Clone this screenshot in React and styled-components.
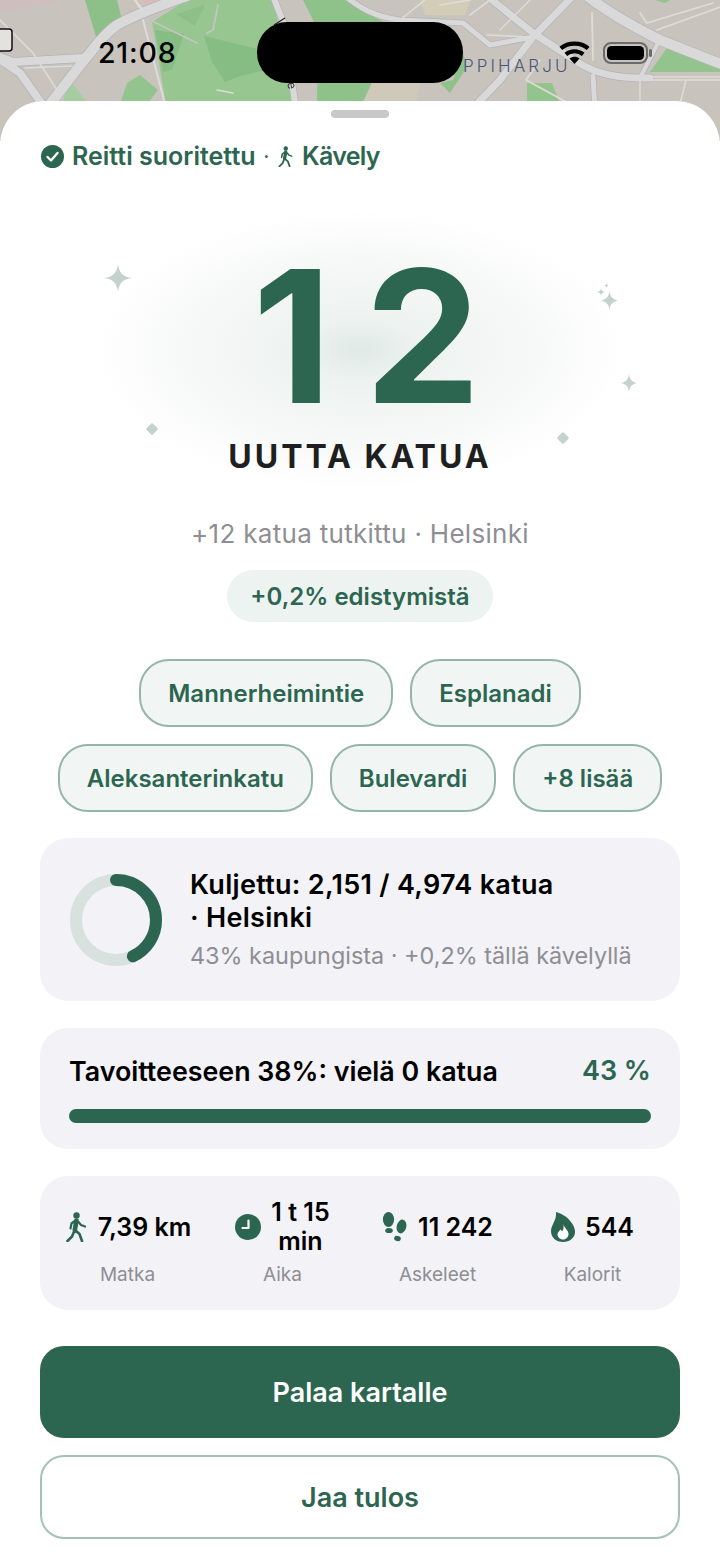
import styled, { createGlobalStyle } from "styled-components";

const GREEN = "#2c6650";
const GREY = "#8e8e93";

const Global = createGlobalStyle`
  html, body { margin: 0; padding: 0; background: #fff; }
  body { font-family: Inter, "Liberation Sans", sans-serif; width: 720px; height: 1564px; overflow: hidden; }
  * { box-sizing: border-box; }
`;

const Screen = styled.div`
  position: relative;
  width: 720px;
  height: 1564px;
  overflow: hidden;
`;

const MapArea = styled.div`
  position: relative;
  height: 141px;
  background: #c8c3bd;
  overflow: hidden;
`;

const MapSvg = styled.svg`
  display: block;
  width: 720px;
  height: 141px;
  filter: blur(0.6px);
`;

const StatusBar = styled.div`
  position: absolute;
  top: 0;
  left: 0;
  right: 0;
  height: 101px;
`;

const Clock = styled.span`
  position: absolute;
  left: 98px;
  top: 35px;
  font-size: 28.5px;
  line-height: 36px;
  font-weight: 500;
  letter-spacing: 0.8px;
  color: #000;
`;

const Island = styled.div`
  position: absolute;
  left: 257px;
  top: 22px;
  width: 206px;
  height: 61px;
  border-radius: 30px;
  background: #000;
`;

const DistrictLabel = styled.span`
  position: absolute;
  left: 463px;
  top: 55px;
  font-size: 17px;
  line-height: 22px;
  font-weight: 300;
  letter-spacing: 3.1px;
  color: #4a5878;
`;

const StatusIcon = styled.svg`
  position: absolute;
  left: ${(p) => p.$left}px;
  top: ${(p) => p.$top}px;
`;

const Sheet = styled.main`
  position: relative;
  margin-top: -40px;
  height: 1463px;
  padding: 0 40px;
  background: #fff;
  border-radius: 44px 44px 0 0;
  display: flex;
  flex-direction: column;
`;

const Grabber = styled.div`
  align-self: center;
  width: 58px;
  height: 8px;
  margin-top: 9px;
  border-radius: 4px;
  background: #c8c8c8;
`;

const RouteStatus = styled.div`
  display: flex;
  align-items: center;
  margin-top: 21px;
  height: 34px;
  color: ${GREEN};
  font-size: 25px;
  font-weight: 600;
`;

const RouteDot = styled.span`
  margin: 0 8px;
  font-size: 18px;
`;

const RouteWalker = styled.span`
  display: flex;
  margin-right: 8px;
`;

const RouteKind = styled.span`
  letter-spacing: -0.7px;
`;

const Hero = styled.section`
  position: relative;
  height: 330px;
  margin: 0 -40px;
  display: flex;
  flex-direction: column;
  align-items: center;
`;

const Glow = styled.div`
  position: absolute;
  left: 95px;
  top: 37px;
  width: 530px;
  height: 280px;
  background: radial-gradient(ellipse 50% 50% at 50% 50%, #dfe9e5 0%, #edf2f0 22%, #f4f7f6 55%, #fbfcfb 85%, #ffffff 100%);
`;

const Sparkle = styled.svg`
  position: absolute;
  left: ${(p) => p.$left}px;
  top: ${(p) => p.$top}px;
  fill: #c3d2cc;
`;

const Count = styled.div`
  position: relative;
  margin-top: 83px;
  margin-left: 46px;
  font-size: 184px;
  line-height: 160px;
  font-weight: 700;
  color: ${GREEN};
  letter-spacing: 33px;
`;

const CountLabel = styled.div`
  position: relative;
  margin-top: 21px;
  font-size: 32px;
  line-height: 40px;
  font-weight: 700;
  color: #1f1f21;
  letter-spacing: 3px;
`;

const Summary = styled.div`
  margin-top: 14px;
  text-align: center;
  font-size: 26px;
  line-height: 34px;
  letter-spacing: 0.3px;
  color: ${GREY};
`;

const ProgressPill = styled.div`
  align-self: center;
  margin-top: 19px;
  height: 52px;
  padding: 0 23px;
  display: flex;
  align-items: center;
  border-radius: 26px;
  background: #edf3f0;
  color: ${GREEN};
  font-size: 24px;
  font-weight: 600;
`;

const Streets = styled.div`
  margin-top: 37px;
  display: flex;
  flex-wrap: wrap;
  justify-content: center;
  gap: 17px;
`;

const Street = styled.div`
  height: 68px;
  padding: 0 27px;
  display: flex;
  align-items: center;
  border-radius: 30px;
  border: 2px solid #96b5a9;
  background: #f1f6f4;
  color: ${GREEN};
  font-size: 24px;
  font-weight: 600;
`;

const Card = styled.section`
  background: #f2f2f7;
  border-radius: 28px;
`;

const WalkedCard = styled(Card)`
  margin-top: 26px;
  height: 163px;
  padding: 0 30px;
  display: flex;
  align-items: center;
  gap: 28px;
`;

const RingBox = styled.svg`
  flex: none;
  display: block;
`;

const WalkedText = styled.div`
  display: flex;
  flex-direction: column;
`;

const WalkedTitle = styled.div`
  font-size: 27px;
  line-height: 33px;
  font-weight: 600;
  letter-spacing: 0.3px;
  color: #000;
  width: 365px;
`;

const WalkedNote = styled.div`
  margin-top: 6px;
  font-size: 23.4px;
  line-height: 32px;
  color: ${GREY};
  white-space: nowrap;
`;

const GoalCard = styled(Card)`
  margin-top: 27px;
  height: 121px;
  padding: 24px 29px 0;
`;

const GoalRow = styled.div`
  display: flex;
  justify-content: space-between;
  align-items: center;
  height: 37px;
`;

const GoalLabel = styled.span`
  font-size: 26.8px;
  font-weight: 600;
  color: #000;
`;

const GoalValue = styled.span`
  font-size: 27px;
  font-weight: 600;
  color: ${GREEN};
`;

const GoalBar = styled.div`
  margin-top: 20px;
  height: 14px;
  border-radius: 7px;
  background: ${GREEN};
`;

const StatsCard = styled(Card)`
  margin-top: 27px;
  height: 134px;
  padding: 21px 10px 0;
  display: grid;
  grid-template-columns: repeat(4, 1fr);
`;

const Stat = styled.div`
  display: flex;
  flex-direction: column;
  align-items: center;
`;

const StatTop = styled.div`
  height: 60px;
  display: flex;
  align-items: center;
  justify-content: center;
  gap: 10px;
`;

const StatValue = styled.span`
  font-size: 25px;
  line-height: 29px;
  font-weight: 600;
  color: #000;
  text-align: center;
  white-space: pre-line;
`;

const StatLabel = styled.span`
  margin-top: 6px;
  font-size: 19px;
  line-height: 24px;
  color: ${GREY};
`;

const PrimaryButton = styled.button`
  margin-top: 36px;
  height: 92px;
  width: 100%;
  border: none;
  border-radius: 24px;
  background: ${GREEN};
  color: #fff;
  font: 600 27px Inter, sans-serif;
`;

const SecondaryButton = styled.button`
  margin-top: 17px;
  height: 84px;
  width: 100%;
  border: 2px solid #a5c0b5;
  border-radius: 24px;
  background: #fff;
  color: ${GREEN};
  font: 600 27px Inter, sans-serif;
`;

const STAR = "M12 0 C12.8 7.5 16.5 11.2 24 12 C16.5 12.8 12.8 16.5 12 24 C11.2 16.5 7.5 12.8 0 12 C7.5 11.2 11.2 7.5 12 0 Z";

function Star({ left, top, size }) {
  return (
    <Sparkle $left={left} $top={top} width={size} height={size} viewBox="0 0 24 24">
      <path d={STAR} />
    </Sparkle>
  );
}

function Diamond({ left, top }) {
  return (
    <Sparkle $left={left} $top={top} width="14" height="14" viewBox="0 0 14 14">
      <rect x="2.5" y="2.5" width="9" height="9" rx="1.5" transform="rotate(45 7 7)" />
    </Sparkle>
  );
}

function Walker({ size = 30, color = GREEN }) {
  return (
    <svg width={size * 0.8} height={size} viewBox="0 0 24 30" fill="none" style={{ flex: "none" }}>
      <circle cx="12.5" cy="3.4" r="3.2" fill={color} />
      <path d="M11.5 8.5 L7.5 11.5 L6.5 16.5" stroke={color} strokeWidth="2.2" strokeLinecap="round" strokeLinejoin="round" />
      <path d="M14.5 10 L17 13 L21 14.5" stroke={color} strokeWidth="2.2" strokeLinecap="round" strokeLinejoin="round" />
      <path d="M12.5 8.5 L10.8 18" stroke={color} strokeWidth="4.6" strokeLinecap="round" />
      <path d="M11 18 L15.5 22 L18 29 M10.5 18.5 L8 24.5 L3.5 29" stroke={color} strokeWidth="2.6" strokeLinecap="round" strokeLinejoin="round" />
    </svg>
  );
}

function Clock24() {
  return (
    <svg width="26" height="26" viewBox="0 0 26 26" style={{ flex: "none" }}>
      <circle cx="13" cy="13" r="13" fill={GREEN} />
      <path d="M13.5 6.5 V14 H7.5" stroke="#fff" strokeWidth="2.2" fill="none" strokeLinecap="round" strokeLinejoin="round" />
    </svg>
  );
}

function Footprints() {
  return (
    <svg width="26" height="30" viewBox="0 0 26 30" fill={GREEN} style={{ flex: "none" }}>
      <ellipse cx="6.5" cy="7.5" rx="5.6" ry="7.5" />
      <ellipse cx="7" cy="18.5" rx="3.8" ry="2.6" />
      <ellipse cx="19.5" cy="14.5" rx="4.8" ry="7" transform="rotate(14 19.5 14.5)" />
      <ellipse cx="15.5" cy="26.5" rx="3.4" ry="2.6" transform="rotate(14 15.5 26.5)" />
    </svg>
  );
}

function Flame() {
  return (
    <svg width="24" height="30" viewBox="0 0 24 30" style={{ flex: "none" }}>
      <path d="M5 0 C9 1 16 4 20 10 C23 14 24 17 24 20 C24 26 18.5 30 12 30 C5 30 0 25.5 0 19 C0 13 6 8 5 0 Z" fill={GREEN} />
      <path d="M12.5 12 C13 16 17.5 18 17.5 22 C17.5 25 15 27.5 12 27.5 C9 27.5 6.5 25 6.5 22.5 C6.5 20 8.5 19 9.5 17.5 C10.5 18.5 11 19 11.5 19 C12.5 17.5 12.8 15 12.5 12 Z" fill="#fff" />
    </svg>
  );
}

function RouteCheck() {
  return (
    <svg width="23" height="23" viewBox="0 0 23 23" style={{ flex: "none", marginRight: 8, marginLeft: 1 }}>
      <circle cx="11.5" cy="11.5" r="11.5" fill={GREEN} />
      <path d="M6.5 12 L10 15.5 L16.5 8" stroke="#fff" strokeWidth="2.4" fill="none" strokeLinecap="round" strokeLinejoin="round" />
    </svg>
  );
}

function Ring() {
  return (
    <RingBox width="92" height="92" viewBox="0 0 92 92" fill="none">
      <circle cx="46" cy="46" r="40" stroke="#d9e1df" strokeWidth="12" />
      <circle cx="46" cy="46" r="40" stroke={GREEN} strokeWidth="12" strokeLinecap="round" strokeDasharray="108 252" transform="rotate(-90 46 46)" />
    </RingBox>
  );
}

// wide streets get a darker casing, drawn in a first pass
const majorRoads = [
  ["M187 -4 C165 4 140 12 117 25 C105 33 97 44 90 53 C80 65 65 85 50 104", 10],
  ["M0 57 L13 62 L83 58 L92 52", 8],
  ["M-2 58 L20 73 L42 104", 8],
  ["M487 -4 L533 33 L570 57 C590 72 610 77 637 78 H650", 7],
  ["M573 -4 L533 37 L500 80 L477 104", 7],
  ["M587 -4 C600 6 620 20 660 40 C685 50 700 56 724 65", 10],
  ["M345 -4 C360 8 375 17 400 20 L463 23 L490 45 L533 37", 5],
  ["M273 -4 L284 24 L296 110", 6],
  ["M593 76 L595 110", 5],
  ["M657 45 L640 78", 4],
];

// Street map behind the sheet
function MapBackdrop() {
  return (
    <MapSvg viewBox="0 0 720 141">
      <rect width="720" height="141" fill="#c8c3bd" />
      <path d="M0 0 H60 L30 8 L0 12 Z" fill="#cdbfbd" />
      <path d="M135 0 H160 L145 4 Z" fill="#dcb9bb" />
      {/* parks */}
      <path d="M85 0 H117 L122 20 L97 40 Z" fill="#8cc088" />
      <path d="M187 0 H273 L296 110 H167 L152 22 Z" fill="#97c691" />
      <path d="M155 30 L184 34 L172 70 L163 72 Z" fill="#86bd83" />
      <path d="M204 36 L270 52 L282 66 L240 76 L225 82 L212 62 Z" fill="#86bd83" />
      <path d="M176 14 L205 5 L195 26 Z" fill="#8cc088" />
      <path d="M70 80 L88 104 H62 Z" fill="#a6cda0" />
      <path d="M127 83 L140 75 L158 90 L147 104 H120 Z" fill="#93c48d" />
      <path d="M303 0 H345 L380 20 L400 30 L365 104 H317 L318 30 Z" fill="#8fc18b" />
      <path d="M375 76 L398 30 L432 44 L415 104 H362 Z" fill="#cfc9ba" />
      <path d="M463 53 L453 80 L440 83 L450 93 L467 67 Z" fill="#8fc18b" />
      <path d="M527 83 H552 L560 104 H527 Z" fill="#94c48e" />
      <path d="M667 48 L720 67 V72 H650 Z" fill="#93c48d" />
      <path d="M655 0 H670 L665 3 Z" fill="#93c48d" />
      <path d="M420 0 H470 L465 15 L425 15 Z" fill="#d3cdb8" />
      <g stroke="#b2b2b8" fill="none" strokeLinecap="round" strokeLinejoin="round">
        {majorRoads.map(([d, w]) => (
          <path key={d} d={d} strokeWidth={w + 1.4} />
        ))}
      </g>
      <g stroke="#d9d9d9" fill="none" strokeLinecap="round" strokeLinejoin="round">
        {majorRoads.map(([d, w]) => (
          <path key={d} d={d} strokeWidth={w} />
        ))}
      </g>
      {/* side streets */}
      <g stroke="#dedcd8" fill="none" strokeLinecap="round" strokeLinejoin="round">
        <path d="M0 20 L33 53 L57 90" strokeWidth="1.6" />
        <path d="M25 68 L72 66" strokeWidth="1.6" />
        <path d="M143 20 L165 104" strokeWidth="2" />
        <path d="M135 0 L142 10" strokeWidth="2.5" />
        <path d="M150 20 L197 43 M218 5 L213 30 L207 33" strokeWidth="1.8" stroke="#c4c4c4" />
        <path d="M217 90 L233 93" strokeWidth="1.4" />
        <path d="M487 35 L530 37" strokeWidth="1.6" />
        <path d="M592 13 L593 60" strokeWidth="1.8" />
        <path d="M640 13 L647 23 L713 3" strokeWidth="1.8" />
        <path d="M657 30 L720 7" strokeWidth="1.8" />
        <path d="M650 77 H720 M650 80 H720" strokeWidth="1.4" />
        <path d="M686 80 L680 104" strokeWidth="1.6" />
        <path d="M640 80 V104" strokeWidth="1.4" />
        <path d="M440 5 L470 0 M400 20 L425 0 M470 15 L490 0" strokeWidth="1.6" />
        <path d="M500 30 L530 0" strokeWidth="1.4" />
        <path d="M540 60 L526 80 L570 104" strokeWidth="1.6" />
      </g>
      <rect x="-6" y="29" width="18" height="22" rx="3" fill="#e4e2de" stroke="#111" strokeWidth="1.5" />
      <path d="M274 25 L285 18" stroke="#222" strokeWidth="1.2" />
      <text x="287" y="91" fontSize="12" fill="#333" fontFamily="Inter" transform="rotate(80 292 87)">e</text>
    </MapSvg>
  );
}

const streetNames = ["Mannerheimintie", "Esplanadi", "Aleksanterinkatu", "Bulevardi", "+8 lisää"];

const stats = [
  { icon: <Walker />, value: "7,39 km", label: "Matka" },
  { icon: <Clock24 />, value: "1 t 15\nmin", label: "Aika" },
  { icon: <Footprints />, value: "11 242", label: "Askeleet" },
  { icon: <Flame />, value: "544", label: "Kalorit" },
];

export default function App() {
  return (
    <>
      <Global />
      <Screen>
        <MapArea>
          <MapBackdrop />
        </MapArea>
        <StatusBar>
          <DistrictLabel>PPIHARJU</DistrictLabel>
          <Clock>21:08</Clock>
          <Island />
          <StatusIcon $left={559} $top={41} width="31" height="23" viewBox="0 0 34 25">
            <path d="M17 25 L11.5 19 C15 16.5 19 16.5 22.5 19 Z" fill="#000" />
            <path d="M7.5 14.5 C13 10 21 10 26.5 14.5 M2 8 C10 1 24 1 32 8" stroke="#000" strokeWidth="4.6" fill="none" />
          </StatusIcon>
          <StatusIcon $left={603} $top={42} width="50" height="22" viewBox="0 0 50 22">
            <rect x="1" y="1" width="43" height="20" rx="7" fill="none" stroke="#6b6b6b" strokeWidth="2" />
            <rect x="4" y="4" width="37" height="14" rx="4.5" fill="#000" />
            <rect x="46" y="7" width="3" height="8" rx="1.5" fill="#6b6b6b" />
          </StatusIcon>
        </StatusBar>
        <Sheet>
          <Grabber />
          <RouteStatus>
            <RouteCheck />
            Reitti suoritettu
            <RouteDot>·</RouteDot>
            <RouteWalker><Walker size={21} /></RouteWalker>
            <RouteKind>Kävely</RouteKind>
          </RouteStatus>
          <Hero>
            <Glow />
            <Star left={104} top={91} size={28} />
            <Star left={600} top={118} size={19} />
            <Star left={597} top={115} size={8} />
            <Star left={604} top={110} size={5} />
            <Star left={620} top={201} size={18} />
            <Diamond left={145} top={249} />
            <Diamond left={556} top={258} />
            <Count>12</Count>
            <CountLabel>UUTTA KATUA</CountLabel>
          </Hero>
          <Summary>+12 katua tutkittu · Helsinki</Summary>
          <ProgressPill>+0,2% edistymistä</ProgressPill>
          <Streets>
            {streetNames.map((name) => (
              <Street key={name}>{name}</Street>
            ))}
          </Streets>
          <WalkedCard>
            <Ring />
            <WalkedText>
              <WalkedTitle>Kuljettu: 2,151 / 4,974 katua · Helsinki</WalkedTitle>
              <WalkedNote>43% kaupungista · +0,2% tällä kävelyllä</WalkedNote>
            </WalkedText>
          </WalkedCard>
          <GoalCard>
            <GoalRow>
              <GoalLabel>Tavoitteeseen 38%: vielä 0 katua</GoalLabel>
              <GoalValue>43 %</GoalValue>
            </GoalRow>
            <GoalBar />
          </GoalCard>
          <StatsCard>
            {stats.map((s) => (
              <Stat key={s.label}>
                <StatTop>
                  {s.icon}
                  <StatValue>{s.value}</StatValue>
                </StatTop>
                <StatLabel>{s.label}</StatLabel>
              </Stat>
            ))}
          </StatsCard>
          <PrimaryButton>Palaa kartalle</PrimaryButton>
          <SecondaryButton>Jaa tulos</SecondaryButton>
        </Sheet>
      </Screen>
    </>
  );
}
